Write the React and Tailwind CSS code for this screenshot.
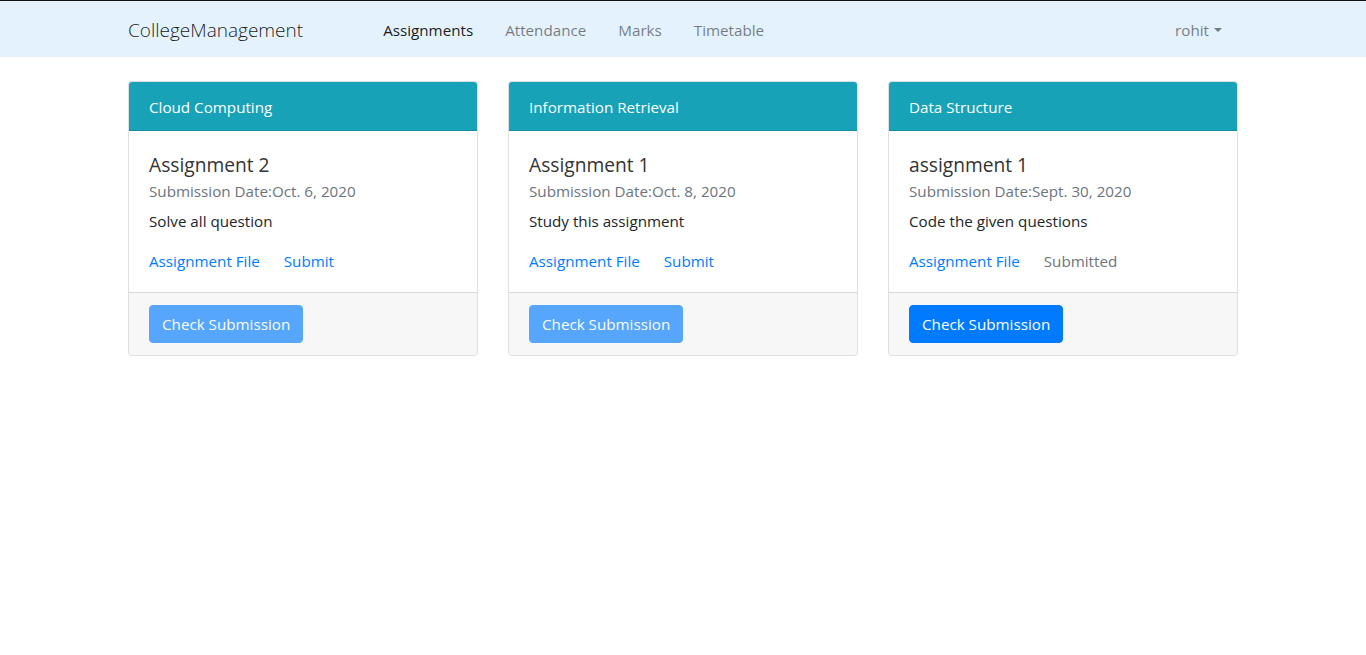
import React from 'react';

const assignments = [
  {
    subject: 'Cloud Computing',
    title: 'Assignment 2',
    date: 'Oct. 6, 2020',
    text: 'Solve all question',
    submitted: false,
  },
  {
    subject: 'Information Retrieval',
    title: 'Assignment 1',
    date: 'Oct. 8, 2020',
    text: 'Study this assignment',
    submitted: false,
  },
  {
    subject: 'Data Structure',
    title: 'assignment 1',
    date: 'Sept. 30, 2020',
    text: 'Code the given questions',
    submitted: true,
  },
];

const Navbar = () => (
  <nav className="bg-[#e3f2fd] border-t border-[#111]">
    <div className="w-[1110px] mx-auto flex items-center h-[56px] pt-[2px]">
      <a className="text-[19px] font-light leading-[30px] text-[rgba(0,0,0,0.9)]">CollegeManagement</a>
      <ul className="flex ml-16 text-[15.2px] leading-6">
        <li className="px-4 text-[rgba(0,0,0,0.9)]">Assignments</li>
        <li className="px-4 text-[rgba(0,0,0,0.5)]">Attendance</li>
        <li className="px-4 text-[rgba(0,0,0,0.5)]">Marks</li>
        <li className="px-4 text-[rgba(0,0,0,0.5)]">Timetable</li>
      </ul>
      <div className="ml-auto pr-4 flex items-center text-[15.2px] text-[rgba(0,0,0,0.5)]">
        rohit
        <span className="ml-[5px] inline-block w-0 h-0 border-l-[4px] border-r-[4px] border-t-[4px] border-l-transparent border-r-transparent border-t-[rgba(0,0,0,0.5)]" />
      </div>
    </div>
  </nav>
);

const AssignmentCard = ({ item }) => (
  <div className="border border-[rgba(0,0,0,0.125)] rounded overflow-hidden bg-white">
    <div className="bg-[#17a2b8] text-white px-5 pt-[13px] pb-[11px] leading-6 border-b border-[rgba(0,0,0,0.125)]">
      {item.subject}
    </div>
    <div className="px-5 pt-5 pb-[19px]">
      <h5 className="text-[19.2px] leading-[28px] text-[#333]">{item.title}</h5>
      <p className="leading-6 text-[#6c757d]">Submission Date:{item.date}</p>
      <p className="mt-[6px] leading-6 text-[#212529]">{item.text}</p>
      <div className="mt-4 flex leading-6">
        <a className="text-[#007bff]">Assignment File</a>
        {item.submitted ? (
          <span className="ml-6 text-[#6c757d]">Submitted</span>
        ) : (
          <a className="ml-6 text-[#007bff]">Submit</a>
        )}
      </div>
    </div>
    <div className="bg-[#f7f7f7] border-t border-[rgba(0,0,0,0.125)] px-5 py-3">
      <button
        className={`bg-[#007bff] border border-[#007bff] text-white px-3 py-[6px] leading-6 rounded ${item.submitted ? '' : 'opacity-65'}`}
      >
        Check Submission
      </button>
    </div>
  </div>
);

export default function App() {
  return (
    <div className="min-h-screen bg-white font-['Open_Sans',sans-serif] text-[15.2px]">
      <Navbar />
      <div className="w-[1110px] mx-auto mt-6 grid grid-cols-3 gap-[30px]">
        {assignments.map((item) => (
          <AssignmentCard key={item.subject} item={item} />
        ))}
      </div>
    </div>
  );
}
